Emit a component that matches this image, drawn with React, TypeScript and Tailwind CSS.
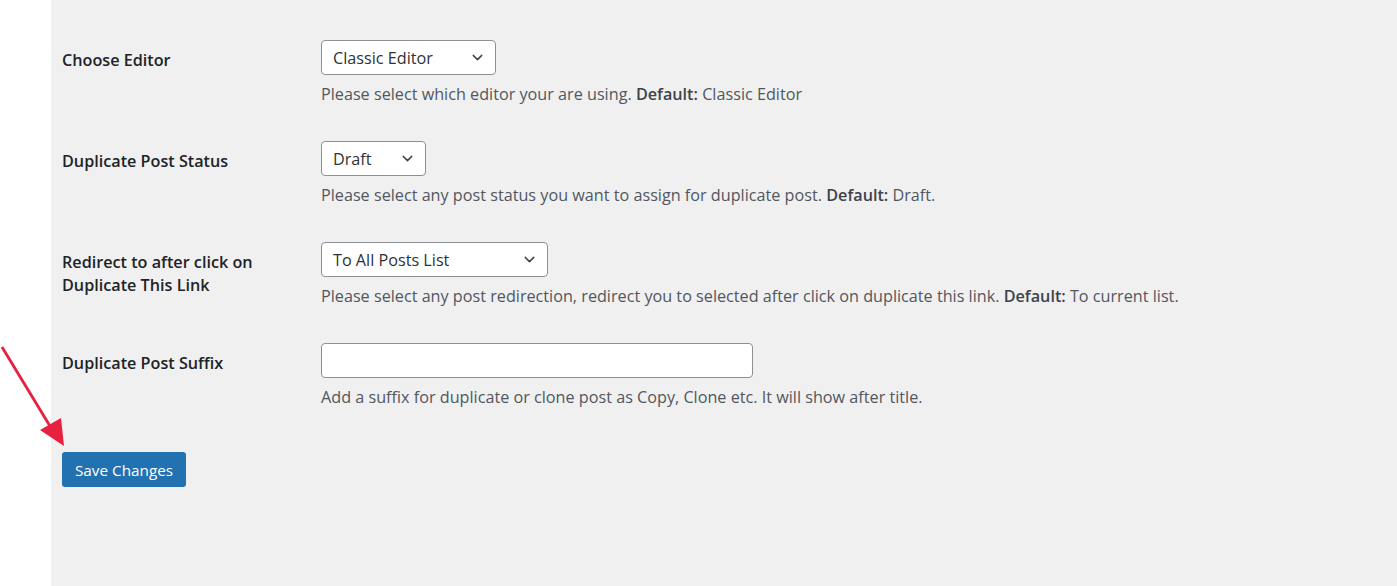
import { ChevronDown } from "lucide-react";

const FONT = "font-['Open_Sans','Noto_Sans',sans-serif]";

function Select({ value, width }: { value: string; width: string }) {
  return (
    <div
      className={`flex h-[35px] items-center justify-between rounded-[4px] border border-[#8c8f94] bg-white pl-[11px] pr-[9px] text-[16.2px] text-[#2c3338] ${width}`}
    >
      <span className="pt-[1px]">{value}</span>
      <ChevronDown className="h-[17px] w-[17px] text-[#3c434a]" strokeWidth={2} />
    </div>
  );
}

function Row({
  label,
  children,
  help,
}: {
  label: React.ReactNode;
  children: React.ReactNode;
  help: React.ReactNode;
}) {
  return (
    <div className="flex h-[101px]">
      <div className="w-[259px] pt-[9px] text-[16.2px] font-semibold leading-[23px] text-[#1d2327]">
        {label}
      </div>
      <div className="flex flex-col">
        {children}
        <p className="mt-[7px] text-[16.2px] leading-[24px] text-[#50575e]">{help}</p>
      </div>
    </div>
  );
}

export default function App() {
  return (
    <div className={`relative flex h-[586px] w-full bg-white ${FONT}`}>
      <div className="w-[51px] shrink-0" />
      <div className="flex-1 bg-[#f0f0f1] pl-[11px] pt-[40px]">
        <Row
          label="Choose Editor"
          help={
            <>
              Please select which editor your are using. <b className="font-semibold text-[#3c434a]">Default:</b> Classic Editor
            </>
          }
        >
          <Select value="Classic Editor" width="w-[175px]" />
        </Row>
        <Row
          label="Duplicate Post Status"
          help={
            <>
              Please select any post status you want to assign for duplicate post.{" "}
              <b className="font-semibold text-[#3c434a]">Default:</b> Draft.
            </>
          }
        >
          <Select value="Draft" width="w-[105px]" />
        </Row>
        <Row
          label={
            <>
              Redirect to after click on
              <br />
              Duplicate This Link
            </>
          }
          help={
            <>
              Please select any post redirection, redirect you to selected after click on duplicate this link.{" "}
              <b className="font-semibold text-[#3c434a]">Default:</b> To current list.
            </>
          }
        >
          <Select value="To All Posts List" width="w-[227px]" />
        </Row>
        <Row
          label="Duplicate Post Suffix"
          help="Add a suffix for duplicate or clone post as Copy, Clone etc. It will show after title."
        >
          <div className="h-[35px] w-[432px] rounded-[4px] border border-[#8c8f94] bg-white" />
        </Row>
        <button className="mt-[8px] h-[35px] w-[124px] rounded-[3px] bg-[#2271b1] pt-[1px] text-[15.3px] text-white">
          Save Changes
        </button>
      </div>

      {/* annotation arrow */}
      <svg className="absolute left-0 top-[340px]" width="80" height="120" viewBox="0 0 80 120">
        <line x1="2" y1="7" x2="56" y2="96" stroke="#e8203f" strokeWidth="2.8" />
        <polygon points="64,106 40,90 61,78" fill="#e8203f" />
      </svg>
    </div>
  );
}
